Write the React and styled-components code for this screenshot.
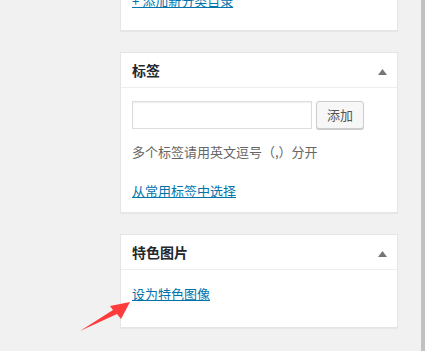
import React from "react";
import styled, { createGlobalStyle } from "styled-components";

const Global = createGlobalStyle`
  html, body { margin: 0; padding: 0; }
  body {
    background: #f1f1f1;
    font-family: "Liberation Sans", "Noto Sans CJK SC", sans-serif;
    font-size: 13px;
    color: #444;
    overflow: hidden;
  }
`;

const Page = styled.div`
  position: relative;
  display: flex;
  height: 351px;
  overflow: hidden;
`;

const Column = styled.div`
  margin-left: 120px;
  width: 278px;
  display: flex;
  flex-direction: column;
  gap: 21px;
`;

const Spacer = styled.div`
  flex: 1;
`;

const ScrollStrip = styled.div`
  width: 4px;
  background: #c1c1c1;
`;

const Panel = styled.div`
  background: #fff;
  border: 1px solid #e5e5e5;
  box-shadow: 0 1px 1px rgba(0, 0, 0, 0.04);
  margin-top: ${(p) => p.$offset || 0}px;
`;

const Header = styled.div`
  display: flex;
  align-items: center;
  justify-content: space-between;
  height: 34px;
  padding: 0 10px 0 11px;
  border-bottom: 1px solid #eee;
`;

const Title = styled.h2`
  margin: 0;
  font-size: 14px;
  font-weight: 700;
  line-height: 18px;
  color: #23282d;
  font-family: "Noto Sans CJK SC", sans-serif;
`;

const Toggle = styled.svg`
  width: 9px;
  height: 6px;
  margin-top: 3px;
`;

const Body = styled.div`
  padding: ${(p) => p.$pad};
`;

const Link = styled.a`
  display: block;
  width: max-content;
  font-family: "Noto Sans CJK SC", sans-serif;
  font-size: 13px;
  line-height: 19px;
  color: #0073aa;
  text-decoration: underline;
  text-underline-offset: 1px;
  cursor: pointer;
  margin-top: ${(p) => p.$mt || 0}px;
`;

const AddRow = styled.div`
  display: flex;
  gap: 4px;
  align-items: flex-start;
`;

const Input = styled.input`
  box-sizing: border-box;
  width: 180px;
  height: 28px;
  margin: 0;
  border: 1px solid #ddd;
  box-shadow: inset 0 1px 2px rgba(0, 0, 0, 0.07);
  background: #fff;
  outline: none;
`;

const Button = styled.button`
  box-sizing: border-box;
  height: 28px;
  padding: 0 10px;
  margin: 0;
  border: 1px solid #ccc;
  border-radius: 3px;
  background: #f7f7f7;
  box-shadow: 0 1px 0 #ccc;
  color: #555;
  font-family: "Noto Sans CJK SC", sans-serif;
  font-size: 13px;
  line-height: 26px;
  cursor: pointer;
`;

const Hint = styled.p`
  margin: 13px 0 0;
  font-family: "Noto Sans CJK SC", sans-serif;
  font-size: 13px;
  line-height: 19px;
  color: #666;
`;

const Arrow = styled.svg`
  position: absolute;
  left: 76px;
  top: 298px;
  width: 60px;
  height: 36px;
`;

const ToggleIcon = () => (
  <Toggle viewBox="0 0 9 6">
    <path d="M4.5 0 L9 6 L0 6 Z" fill="#72777c" />
  </Toggle>
);

export default function App() {
  return (
    <>
      <Global />
      <Page>
        <Column>
          <Panel $offset={-10}>
            <Body $pad="0 12px 20px 11px">
              <Link>+ 添加新分类目录</Link>
            </Body>
          </Panel>
          <Panel>
            <Header>
              <Title>标签</Title>
              <ToggleIcon />
            </Header>
            <Body $pad="13px 12px 12px 11px">
              <AddRow>
                <Input type="text" />
                <Button>添加</Button>
              </AddRow>
              <Hint>多个标签请用英文逗号（,）分开</Hint>
              <Link $mt={20}>从常用标签中选择</Link>
            </Body>
          </Panel>
          <Panel>
            <Header>
              <Title>特色图片</Title>
              <ToggleIcon />
            </Header>
            <Body $pad="14px 12px 24px 11px">
              <Link>设为特色图像</Link>
            </Body>
          </Panel>
        </Column>
        <Spacer />
        <ScrollStrip />
        <Arrow viewBox="76 298 60 36">
          <polygon
            points="80,331 113,310 110,306 130,302 121,319 117,314"
            fill="#ff3b3b"
          />
        </Arrow>
      </Page>
    </>
  );
}
